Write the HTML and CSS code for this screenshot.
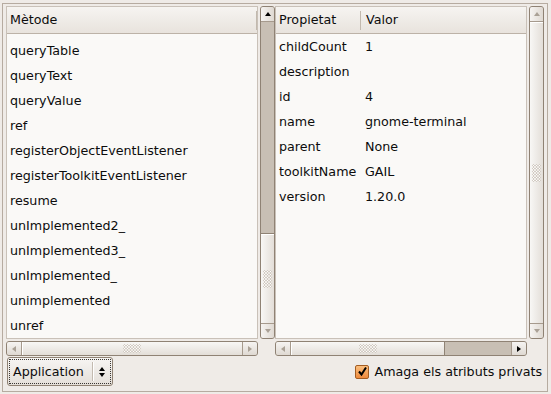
FILE: index.html
```html
<!DOCTYPE html>
<html lang="ca">

<head>
    <meta charset="UTF-8">
    <title>Accerciser - Interfície</title>
    <link rel="stylesheet" href="styles.css">
</head>

<body>
    <div class="window">
        <div class="panes">
            <!-- Llista de mètodes -->
            <div class="pane">
                <div class="tree">
                    <div class="tree-head">
                        <div class="col col-method">Mètode</div>
                    </div>
                    <div class="tree-body tree-body-scrolled">
                        <div class="row">queryTable</div>
                        <div class="row">queryText</div>
                        <div class="row">queryValue</div>
                        <div class="row">ref</div>
                        <div class="row">registerObjectEventListener</div>
                        <div class="row">registerToolkitEventListener</div>
                        <div class="row">resume</div>
                        <div class="row">unImplemented2_</div>
                        <div class="row">unImplemented3_</div>
                        <div class="row">unImplemented_</div>
                        <div class="row">unimplemented</div>
                        <div class="row">unref</div>
                    </div>
                </div>
                <div class="vscroll">
                    <div class="step step-top"><span class="arrow arrow-up"></span></div>
                    <div class="trough trough-v">
                        <div class="slider slider-v slider-end"><span class="grip grip-v"></span></div>
                    </div>
                    <div class="step step-bottom"><span class="arrow arrow-down off"></span></div>
                </div>
                <div class="hscroll">
                    <div class="step step-left"><span class="arrow arrow-left off"></span></div>
                    <div class="trough trough-h">
                        <div class="slider slider-h slider-full"><span class="grip grip-h"></span></div>
                    </div>
                    <div class="step step-right"><span class="arrow arrow-right off"></span></div>
                </div>
            </div>

            <!-- Llista de propietats -->
            <div class="pane">
                <div class="tree">
                    <div class="tree-head">
                        <div class="col col-prop">Propietat</div>
                        <div class="col col-value">Valor</div>
                    </div>
                    <div class="tree-body">
                        <div class="row"><span class="cell-prop">childCount</span><span class="cell-value">1</span></div>
                        <div class="row"><span class="cell-prop">description</span><span class="cell-value"></span></div>
                        <div class="row"><span class="cell-prop">id</span><span class="cell-value">4</span></div>
                        <div class="row"><span class="cell-prop">name</span><span class="cell-value">gnome-terminal</span></div>
                        <div class="row"><span class="cell-prop">parent</span><span class="cell-value">None</span></div>
                        <div class="row"><span class="cell-prop">toolkitName</span><span class="cell-value">GAIL</span></div>
                        <div class="row"><span class="cell-prop">version</span><span class="cell-value">1.20.0</span></div>
                    </div>
                </div>
                <div class="vscroll">
                    <div class="step step-top"><span class="arrow arrow-up off"></span></div>
                    <div class="trough trough-v">
                        <div class="slider slider-v slider-full"><span class="grip grip-v"></span></div>
                    </div>
                    <div class="step step-bottom"><span class="arrow arrow-down off"></span></div>
                </div>
                <div class="hscroll">
                    <div class="step step-left"><span class="arrow arrow-left off"></span></div>
                    <div class="trough trough-h">
                        <div class="slider slider-h slider-start"><span class="grip grip-h"></span></div>
                    </div>
                    <div class="step step-right"><span class="arrow arrow-right"></span></div>
                </div>
            </div>
        </div>

        <div class="footer">
            <div class="combo">
                <div class="combo-focus">
                    <span class="combo-text">Application</span>
                    <span class="combo-sep"></span>
                    <span class="combo-arrows">
                        <span class="arrow arrow-up small"></span>
                        <span class="arrow arrow-down small"></span>
                    </span>
                </div>
            </div>
            <label class="check">
                <span class="check-box">
                    <svg width="11" height="11" viewBox="0 0 11 11">
                        <path d="M2 5.5 L4.5 8.5 L9 1.5" fill="none" stroke="#000" stroke-width="2" stroke-linejoin="miter"/>
                    </svg>
                </span>
                Amaga els atributs privats
            </label>
        </div>
    </div>
</body>

</html>
```

FILE: styles.css
```css
/* Finestra principal */
body {
    margin: 0;
    width: 551px;
    height: 394px;
    overflow: hidden;
    background-color: #efebe7;
    font-family: "DejaVu Sans", Verdana, sans-serif;
    font-size: 12.7px;
    color: #0c0c0c;
}

.window {
    box-sizing: border-box;
    margin: 3px 0 0 2px;
    width: 546px;
    height: 389px;
    border: 1px solid #b6aba0;
    padding: 2px 3px 0 3px;
    display: flex;
    flex-direction: column;
}

.panes {
    display: flex;
    height: 350px;
}

.pane {
    width: 269px;
    display: grid;
    grid-template-columns: 1fr 15px;
    grid-template-rows: 1fr 15px;
    column-gap: 2px;
    row-gap: 2px;
}

/* Arbres */
.tree {
    background-color: #faf9f7;
    border: 1px solid #c9c1b8;
    overflow: hidden;
    display: flex;
    flex-direction: column;
}

.tree-head {
    height: 26px;
    display: flex;
    background: linear-gradient(#f6f4f1, #e8e3dd);
    border-bottom: 1px solid #bcb2a7;
    flex-shrink: 0;
}

.col {
    line-height: 26px;
    padding-left: 3px;
    position: relative;
}

.col::after {
    content: "";
    position: absolute;
    right: 0;
    top: 4px;
    bottom: 3px;
    width: 1px;
    background-color: #c2b9ae;
}

.col-method {
    width: 247px;
}

.col-prop {
    width: 82px;
}

.col-value {
    flex: 1;
    padding-left: 5px;
}

.col-value::after {
    display: none;
}

.tree-body {
    padding-left: 3px;
}

.tree-body-scrolled {
    padding-top: 4px;
}

.row {
    height: 25px;
    line-height: 25px;
    white-space: nowrap;
    display: flex;
}

.cell-prop {
    width: 86px;
}

/* Barres de desplaçament */
.vscroll,
.hscroll {
    box-sizing: border-box;
    border: 1px solid #8f8274;
    border-radius: 3px;
    overflow: hidden;
    display: flex;
    background-color: #c8bfb4;
}

.vscroll {
    flex-direction: column;
}

.hscroll {
    grid-column: 1;
}

.step {
    flex-shrink: 0;
    display: flex;
    align-items: center;
    justify-content: center;
}

.vscroll .step {
    height: 14px;
    background: linear-gradient(to right, #f6f4f2, #dfd9d2);
}

.step-top {
    border-bottom: 1px solid #a69a8d;
}

.step-bottom {
    border-top: 1px solid #a69a8d;
}

.hscroll .step {
    width: 14px;
    background: linear-gradient(#f6f4f2, #dfd9d2);
}

.step-left {
    border-right: 1px solid #a69a8d;
}

.step-right {
    border-left: 1px solid #a69a8d;
}

.trough {
    flex: 1;
    display: flex;
}

.trough-v {
    flex-direction: column;
}

.slider {
    display: flex;
    align-items: center;
    justify-content: center;
}

.slider-v {
    background: linear-gradient(to right, #f8f7f5, #e3ded8);
    box-shadow: inset 0 1px #ffffff;
}

.slider-h {
    background: linear-gradient(#f8f7f5, #e3ded8);
    box-shadow: inset 1px 0 #ffffff;
}

.slider-full {
    flex: 1;
}

.slider-end {
    height: 89px;
    margin-top: auto;
    border-top: 1px solid #8f8274;
}

.slider-start {
    width: 153px;
    border-right: 1px solid #8f8274;
}

.grip {
    background-image: radial-gradient(circle, #ffffff 0.7px, #d3ccc4 1px, transparent 1.3px);
    background-size: 3px 3px;
}

.grip-v {
    width: 9px;
    height: 18px;
}

.grip-h {
    width: 18px;
    height: 9px;
}

/* Fletxes */
.arrow {
    width: 0;
    height: 0;
    border-style: solid;
    border-color: transparent;
}

.arrow-up {
    border-width: 0 3.5px 4px 3.5px;
    border-bottom-color: #000000;
}

.arrow-down {
    border-width: 4px 3.5px 0 3.5px;
    border-top-color: #000000;
}

.arrow-left {
    border-width: 3.5px 4px 3.5px 0;
    border-right-color: #000000;
}

.arrow-right {
    border-width: 3.5px 0 3.5px 4px;
    border-left-color: #000000;
}

.arrow-up.off {
    border-bottom-color: #aaa196;
}

.arrow-down.off {
    border-top-color: #aaa196;
}

.arrow-left.off {
    border-right-color: #aaa196;
}

.arrow-right.off {
    border-left-color: #aaa196;
}

/* Peu: desplegable i casella */
.footer {
    display: flex;
    justify-content: space-between;
    align-items: center;
    margin-top: 1px;
    padding-right: 2px;
}

.combo {
    box-sizing: border-box;
    margin-left: 1px;
    width: 106px;
    height: 29px;
    border: 1px solid #8f8274;
    border-radius: 3px;
    background: linear-gradient(#f7f5f3, #e4dfd9);
    padding: 1px;
}

.combo-focus {
    box-sizing: border-box;
    height: 100%;
    border: 1px dotted #3a3632;
    display: flex;
    align-items: center;
}

.combo-text {
    padding-left: 3px;
    width: 79px;
}

.combo-sep {
    width: 1px;
    height: 19px;
    background-color: #c3bab0;
    border-right: 1px solid #ffffff;
}

.combo-arrows {
    flex: 1;
    display: flex;
    flex-direction: column;
    align-items: center;
    gap: 2px;
}

.arrow-up.small,
.arrow-down.small {
    border-left-width: 3px;
    border-right-width: 3px;
}

.check {
    display: flex;
    align-items: center;
    gap: 5px;
}

.check-box {
    box-sizing: border-box;
    width: 14px;
    height: 14px;
    border: 1px solid #a35d22;
    border-radius: 2px;
    background: linear-gradient(#fbbf7e, #ee8a3c);
    display: flex;
    align-items: center;
    justify-content: center;
}
```
